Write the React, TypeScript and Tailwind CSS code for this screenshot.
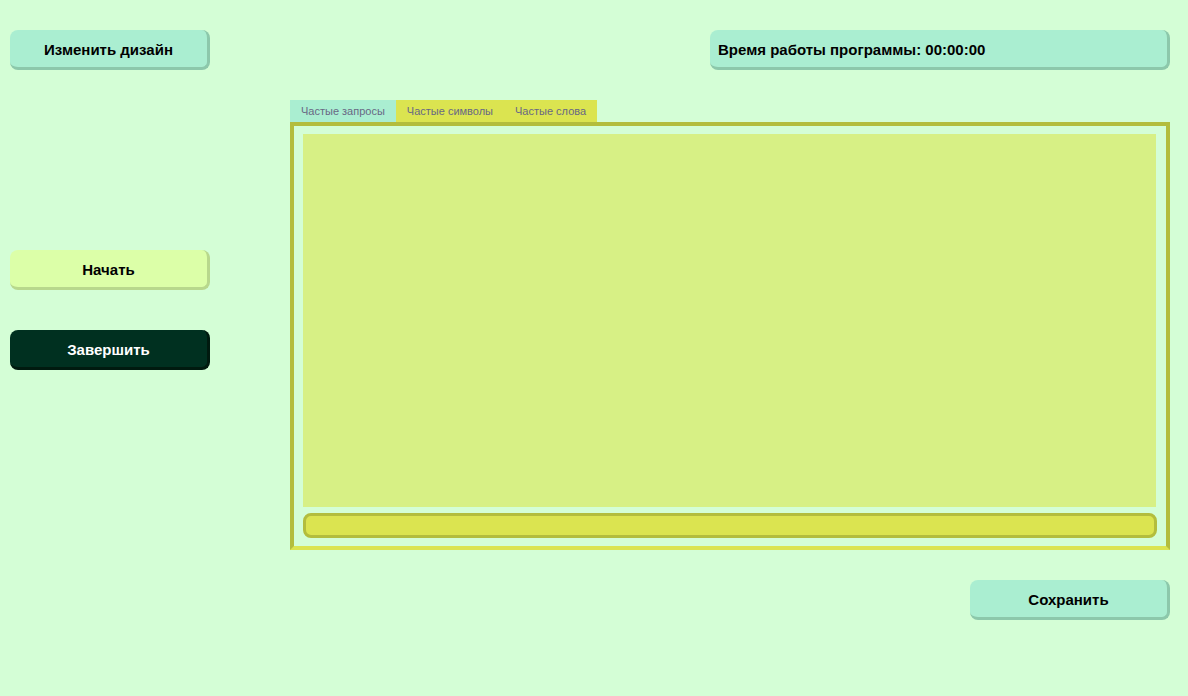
import React, { useState } from 'react';

const Btn = ({ label, className }: { label: string; className: string }) => (
  <button
    className={`w-[200px] h-[40px] pt-[3px] rounded-lg border-r-[3px] border-b-[3px] text-[15px] font-bold font-['Liberation_Sans',sans-serif] ${className}`}
  >
    {label}
  </button>
);

const App = () => {
  const [tab, setTab] = useState(0);
  const tabs = ['Частые запросы', 'Частые символы', 'Частые слова'];

  return (
    <div className="w-full h-[696px] bg-[#d4fed6] flex pl-[10px] pt-[30px] font-['Liberation_Sans',sans-serif]">
      <div className="w-[280px] flex flex-col items-start">
        <Btn label="Изменить дизайн" className="bg-[#aaeed1] border-[#8cc8ab] text-black" />
        <Btn label="Начать" className="mt-[180px] bg-[#dcffa8] border-[#b8d88c] text-black" />
        <Btn label="Завершить" className="mt-[40px] bg-[#003020] border-[#001a0f] text-white" />
      </div>

      <div className="w-[880px] flex flex-col">
        <div className="ml-auto w-[460px] h-[40px] pt-[3px] rounded-lg border-r-[3px] border-b-[3px] bg-[#aaeed1] border-[#8cc8ab] flex items-center pl-[8px] text-[15px] font-bold text-black">
          Время работы программы: 00:00:00
        </div>

        <div className="mt-[30px] flex h-[22px]">
          {tabs.map((t, i) => (
            <button
              key={t}
              onClick={() => setTab(i)}
              className={`px-[11px] pt-[1px] text-[11px] text-[#686884] ${i === tab ? 'bg-[#aaeed1]' : 'bg-[#dbe450]'}`}
            >
              {t}
            </button>
          ))}
        </div>

        <div className="h-[428px] border-[4px] border-[#b3bd3d] border-b-[#dbe450] pt-[8px] pl-[9px] pr-[10px] pb-[8px] flex flex-col">
          <div className="flex-1 bg-[#d7f085]" />
          <div className="mt-[6px] h-[25px] mr-[-1px] rounded-lg border-[3px] border-[#b3bd3d] bg-[#dbe450]" />
        </div>

        <div className="mt-[30px] self-end">
          <Btn label="Сохранить" className="bg-[#aaeed1] border-[#8cc8ab] text-black" />
        </div>
      </div>
    </div>
  );
};

export default App;
